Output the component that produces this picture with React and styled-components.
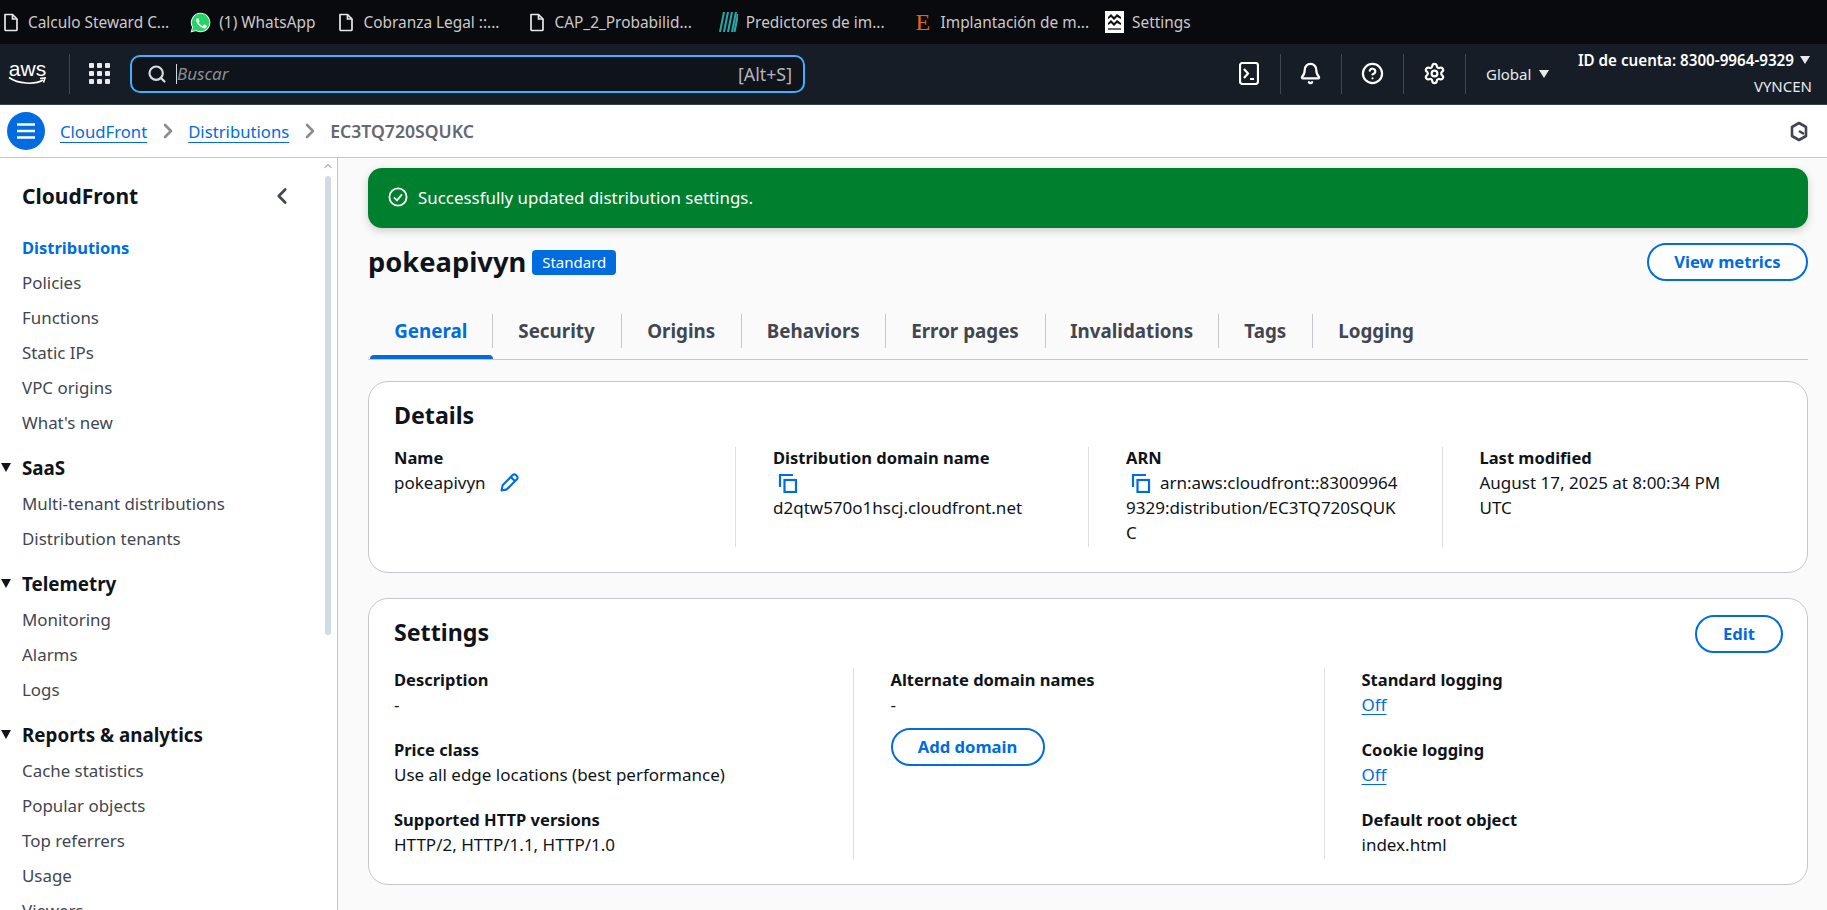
import styled, { createGlobalStyle } from "styled-components";
import { Bell, CircleHelp, Settings as Gear, ChevronRight, ChevronLeft, ChevronUp, Search } from "lucide-react";

const FONT = `"Noto Sans", "Open Sans", sans-serif`;

const bookmarks = [
  { icon: "doc", label: "Calculo Steward C...", gap: 9, left: 3 },
  { icon: "wa", label: "(1) WhatsApp", gap: 8, left: 21 },
  { icon: "doc", label: "Cobranza Legal ::...", gap: 9, left: 23 },
  { icon: "doc", label: "CAP_2_Probabilid...", gap: 9, left: 30 },
  { icon: "stripes", label: "Predictores de im...", gap: 8, left: 27 },
  { icon: "e", label: "Implantación de m...", gap: 9, left: 31 },
  { icon: "mpe", label: "Settings", gap: 8, left: 16 },
];

const tabs = [
  { label: "General", w: 122.5, active: true },
  { label: "Security", w: 129 },
  { label: "Origins", w: 120.5 },
  { label: "Behaviors", w: 143.5 },
  { label: "Error pages", w: 160 },
  { label: "Invalidations", w: 173.5 },
  { label: "Tags", w: 93.5 },
  { label: "Logging", w: 127, last: true },
];

const navGroups = [
  { items: ["Distributions", "Policies", "Functions", "Static IPs", "VPC origins", "What's new"] },
  { title: "SaaS", items: ["Multi-tenant distributions", "Distribution tenants"] },
  { title: "Telemetry", items: ["Monitoring", "Alarms", "Logs"] },
  { title: "Reports & analytics", items: ["Cache statistics", "Popular objects", "Top referrers", "Usage", "Viewers"] },
];

const DocIcon = () => (
  <svg width="16" height="19" viewBox="0 0 16 19" fill="none" stroke="#e8e8e8" strokeWidth="1.7">
    <path d="M2 1.5h7.5L14 6v10.5a1 1 0 0 1-1 1H3a1 1 0 0 1-1-1z" strokeLinejoin="round" />
    <path d="M9.5 1.5V6H14" />
  </svg>
);

const WhatsAppIcon = () => (
  <svg width="21" height="21" viewBox="0 0 24 24">
    <path d="M12 1.500a10.500 10.500 0 0 0-9 15.800L1.500 22.500l5.400-1.400A10.500 10.500 0 1 0 12 1.500z" fill="#25d366" stroke="#e8f5ec" strokeWidth="1.2" />
    <path d="M8.800 6.800c-.4 0-1.700.8-1.700 2.600 0 1.700 1.200 3.300 1.400 3.600.2.200 2.400 3.700 5.800 5 2.800 1.100 3.400.9 4-.1.500-.6 1-1.600.9-2.200-.1-.3-2.100-1.300-2.600-1.400-.4-.1-.7 0-.9.300-.3.400-.8 1.100-1 1.200-.2.200-.4.200-.7.100-1-.4-2.800-1.400-4-3.500-.2-.3 0-.5.100-.6l.7-.9c.2-.2.200-.4.100-.7l-1-2.500c-.2-.6-.6-.9-1.100-.9z" fill="#fff" />
  </svg>
);

const StripesIcon = () => (
  <svg width="19" height="20" viewBox="0 0 19 20" stroke="#2aa5a5" strokeWidth="2.1">
    <path d="M1 20 5 0M5 20 9 0M9 20 13 0M13 20 17 0M15.5 20 19 2" />
  </svg>
);

const MpeIcon = () => (
  <svg width="19" height="22" viewBox="0 0 19 22">
    <rect width="19" height="22" fill="#fff" />
    <path d="M3 6l3-3 3 3 3-3 4 3v2l-4-2-3 3-3-3-3 2zM3 12l3-3 3 3 3-3 4 3v2l-4-2-3 3-3-3-3 2z" fill="#111" />
    <path d="M3 17h13v2H3z" fill="#666" />
  </svg>
);

const ConsoleIcon = () => (
  <svg width="20" height="23" viewBox="0 0 20 23" fill="none" stroke="#fff" strokeWidth="2.2">
    <rect x="1" y="1" width="18" height="21" rx="2.5" />
    <path d="M5 7l4 4.500-4 4.500M11 17h4" />
  </svg>
);

const HamburgerIcon = () => (
  <svg width="20" height="18" viewBox="0 0 20 18" stroke="#fff" strokeWidth="2.6">
    <path d="M1 2.5h18M1 9h18M1 15.5h18" />
  </svg>
);

const QIcon = () => (
  <svg width="18" height="21" viewBox="0 0 18 21" fill="none" stroke="#424650" strokeWidth="2.6">
    <path d="M9 2l7 4v9l-7 4-7-4V6z" strokeLinejoin="round" />
    <path d="M9 10l5 3" />
  </svg>
);

const SuccessIcon = () => (
  <svg width="20" height="20" viewBox="0 0 20 20" fill="none" stroke="#fff" strokeWidth="1.8">
    <circle cx="10" cy="10" r="8.6" />
    <path d="M6 10.3l3 3 5-6" />
  </svg>
);

const CopyIcon = () => (
  <svg width="20" height="20" viewBox="0 0 20 20" fill="none" stroke="#006ce0" strokeWidth="2.2">
    <path d="M2 14V2h13" />
    <rect x="6.5" y="7" width="11.5" height="12" />
  </svg>
);

const PencilIcon = () => (
  <svg width="19" height="19" viewBox="0 0 18 18" fill="none" stroke="#006ce0" strokeWidth="2">
    <path d="M1.5 16.5l1-5L12 2a2 2 0 0 1 3 0l1 1a2 2 0 0 1 0 3l-9.500 9.500z" strokeLinejoin="round" />
    <path d="M10.500 4l3.500 3.500" />
  </svg>
);

const Bookmark = ({ item }) => (
  <BookmarkItem $gap={item.gap} $left={item.left}>
    {item.icon === "doc" && <DocIcon />}
    {item.icon === "wa" && <WhatsAppIcon />}
    {item.icon === "stripes" && <StripesIcon />}
    {item.icon === "e" && <FaviconE>E</FaviconE>}
    {item.icon === "mpe" && <MpeIcon />}
    <span>{item.label}</span>
  </BookmarkItem>
);

const Field = ({ label, snug, children }) => (
  <FieldBlock>
    <FieldLabel $snug={snug}>{label}</FieldLabel>
    <FieldValue>{children}</FieldValue>
  </FieldBlock>
);

const App = () => {
  return (
    <Page>
      <GlobalStyle />
      <BookmarkBar>
        {bookmarks.map((b) => (
          <Bookmark key={b.label} item={b} />
        ))}
      </BookmarkBar>

      <TopNav>
        <AwsLogo>
          <AwsText>aws</AwsText>
          <svg width="39" height="10" viewBox="0 0 39 10" fill="none" stroke="#fff" strokeWidth="1.6">
            <path d="M1 1.500C10 8 27 9 35 4" />
            <path d="M32 2.500l5-.5-1.500 4.500" />
          </svg>
        </AwsLogo>
        <NavDivider />
        <AppsGrid>
          {Array.from({ length: 9 }).map((_, i) => (
            <AppsDot key={i} />
          ))}
        </AppsGrid>
        <SearchBox>
          <Search size={20} color="#d5dbdb" strokeWidth={2.6} />
          <SearchCaret />
          <SearchText>Buscar</SearchText>
          <SearchHint>[Alt+S]</SearchHint>
        </SearchBox>
        <NavRight>
          <NavIconCell><ConsoleIcon /></NavIconCell>
          <NavIconCell $w={61.500}><Bell size={23} color="#fff" strokeWidth={2.3} /></NavIconCell>
          <NavIconCell $w={61.500}><CircleHelp size={23} color="#fff" strokeWidth={2.3} /></NavIconCell>
          <NavIconCell $w={62.500}><Gear size={23} color="#fff" strokeWidth={2.3} /></NavIconCell>
          <RegionMenu>
            Global <Caret />
          </RegionMenu>
          <AccountMenu>
            <AccountId>
              ID de cuenta: 8300-9964-9329 <Caret />
            </AccountId>
            <AccountName>VYNCEN</AccountName>
          </AccountMenu>
        </NavRight>
      </TopNav>

      <BreadcrumbBar>
        <MenuButton><HamburgerIcon /></MenuButton>
        <CrumbLink>CloudFront</CrumbLink>
        <ChevronRight size={24} color="#8c8c94" strokeWidth={2.6} />
        <CrumbLink>Distributions</CrumbLink>
        <ChevronRight size={24} color="#8c8c94" strokeWidth={2.6} />
        <CrumbCurrent>EC3TQ720SQUKC</CrumbCurrent>
        <CrumbEnd><QIcon /></CrumbEnd>
      </BreadcrumbBar>

      <Body>
        <Sidebar>
          <ScrollUp><ChevronUp size={12} color="#b8bcc2" strokeWidth={3} /></ScrollUp>
          <ScrollThumb />
          <SidebarHead>
            <SidebarTitle>CloudFront</SidebarTitle>
            <ChevronLeft size={26} color="#424650" strokeWidth={2.5} />
          </SidebarHead>
          {navGroups.map((g) => (
            <NavGroup key={g.items[0]} $spaced={!!g.title}>
              {g.title && (
                <NavGroupTitle>
                  <GroupCaret />
                  {g.title}
                </NavGroupTitle>
              )}
              {g.items.map((it) => (
                <NavItem key={it} $active={it === "Distributions"}>
                  {it}
                </NavItem>
              ))}
            </NavGroup>
          ))}
        </Sidebar>

        <Main>
          <Banner>
            <SuccessIcon />
            Successfully updated distribution settings.
          </Banner>

          <TitleRow>
            <PageTitle>pokeapivyn</PageTitle>
            <Badge>Standard</Badge>
            <OutlineButton $push $w={161}>View metrics</OutlineButton>
          </TitleRow>

          <TabList>
            {tabs.map((t) => (
              <Tab key={t.label} $active={t.active} $last={t.last} style={{ width: t.w }}>
                {t.label}
              </Tab>
            ))}
          </TabList>

          <Card>
            <CardHead>
              <CardTitle>Details</CardTitle>
            </CardHead>
            <Columns $cols="341px 353px 353.500px 1fr" $top={11} $h={100}>
              <Column>
                <Field snug label="Name">
                  <InlineRow>
                    pokeapivyn <PencilIcon />
                  </InlineRow>
                </Field>
              </Column>
              <Column $line>
                <Field snug label="Distribution domain name">
                  <IconLine><CopyIcon /></IconLine>
                  d2qtw570o1hscj.cloudfront.net
                </Field>
              </Column>
              <Column $line>
                <Field snug label="ARN">
                  <CopyInline><CopyIcon /></CopyInline>
                  arn:aws:cloudfront::83009964
                  <br />
                  9329:distribution/EC3TQ720SQUK
                  <br />C
                </Field>
              </Column>
              <Column $line>
                <Field snug label="Last modified">
                  August 17, 2025 at 8:00:34 PM
                  <br />
                  UTC
                </Field>
              </Column>
            </Columns>
          </Card>

          <Card $top={25}>
            <CardHead>
              <CardTitle>Settings</CardTitle>
              <OutlineButton $push $w={88}>Edit</OutlineButton>
            </CardHead>
            <Columns $cols="458.500px 471px 1fr" $top={15} $h={191}>
              <Column>
                <FieldStack>
                  <Field label="Description">-</Field>
                  <Field label="Price class">Use all edge locations (best performance)</Field>
                  <Field label="Supported HTTP versions">HTTP/2, HTTP/1.1, HTTP/1.0</Field>
                </FieldStack>
              </Column>
              <Column $line>
                <Field label="Alternate domain names">-</Field>
                <OutlineButton $w={154} $mt={11}>Add domain</OutlineButton>
              </Column>
              <Column $line>
                <FieldStack>
                  <Field label="Standard logging"><PlainLink>Off</PlainLink></Field>
                  <Field label="Cookie logging"><PlainLink>Off</PlainLink></Field>
                  <Field label="Default root object">index.html</Field>
                </FieldStack>
              </Column>
            </Columns>
          </Card>

          <Card $top={26} />
        </Main>
      </Body>
    </Page>
  );
};

//Styled Components
const GlobalStyle = createGlobalStyle`
  html, body {
    margin: 0;
    padding: 0;
    overflow: hidden;
    background: #fafafa;
  }
  * {
    box-sizing: border-box;
  }
`;

const Page = styled.div`
  width: 1827px;
  height: 910px;
  overflow: hidden;
  display: flex;
  flex-direction: column;
  font-family: ${FONT};
  font-size: 17px;
  color: #0f141a;
`;

const BookmarkBar = styled.div`
  height: 44px;
  flex: none;
  display: flex;
  align-items: center;
  background: #090a0d;
`;

const BookmarkItem = styled.div`
  display: flex;
  align-items: center;
  gap: ${(p) => p.$gap}px;
  margin-left: ${(p) => p.$left}px;
  color: #c9c9c9;
  font-size: 15.400px;
  white-space: nowrap;
`;

const FaviconE = styled.span`
  font-family: "Liberation Serif", serif;
  font-size: 24px;
  line-height: 20px;
  color: #e8650a;
  width: 16px;
`;

const TopNav = styled.div`
  height: 61px;
  flex: none;
  display: flex;
  align-items: center;
  padding-bottom: 1px;
  background: #161d26;
  border-bottom: 1px solid #3b4250;
`;

const AwsLogo = styled.div`
  width: 39px;
  margin-left: 8px;
  display: flex;
  flex-direction: column;
  align-items: center;
  line-height: 1;
`;

const AwsText = styled.span`
  font-family: "Liberation Sans", sans-serif;
  font-size: 21px;
  line-height: 15px;
  color: #fff;
`;

const NavDivider = styled.div`
  width: 1px;
  height: 40px;
  margin: 0 19px 0 22px;
  background: #424650;
`;

const AppsGrid = styled.div`
  width: 21px;
  display: grid;
  grid-template-columns: repeat(3, 5px);
  gap: 3px;
`;

const AppsDot = styled.span`
  width: 5px;
  height: 5px;
  border-radius: 1px;
  background: #e8eaed;
`;

const SearchBox = styled.div`
  width: 675px;
  height: 38px;
  margin-left: 20px;
  padding: 0 11px 0 15px;
  display: flex;
  align-items: center;
  background: #0f141a;
  border: 2px solid #42aeff;
  border-radius: 10px;
`;

const SearchCaret = styled.span`
  width: 1px;
  height: 20px;
  margin-left: 9px;
  background: #d5dbdb;
`;

const SearchText = styled.span`
  font-style: italic;
  font-size: 17px;
  color: #8c8c94;
`;

const SearchHint = styled.span`
  margin-left: auto;
  font-size: 17.800px;
  color: #b4b4bb;
`;

const NavRight = styled.div`
  margin-left: auto;
  display: flex;
  align-items: center;
  height: 100%;
`;

const NavIconCell = styled.div`
  width: ${(p) => p.$w || 62.500}px;
  height: 40px;
  display: flex;
  align-items: center;
  justify-content: center;
  border-right: 1px solid #424650;
`;

const RegionMenu = styled.div`
  width: 113px;
  padding-left: 20px;
  display: flex;
  align-items: center;
  gap: 8px;
  font-size: 15px;
  color: #e8eaed;
`;

const Caret = styled.span`
  display: inline-block;
  width: 0;
  height: 0;
  border-left: 5.500px solid transparent;
  border-right: 5.500px solid transparent;
  border-top: 8px solid #e8eaed;
`;

const AccountMenu = styled.div`
  width: 248px;
  padding-right: 15px;
  display: flex;
  flex-direction: column;
  align-items: flex-end;
  color: #fff;
`;

const AccountId = styled.div`
  display: flex;
  align-items: center;
  gap: 6px;
  margin-right: 2px;
  margin-top: -2px;
  font-size: 15.200px;
  font-weight: 600;
  line-height: 27px;
  white-space: nowrap;
`;

const AccountName = styled.div`
  font-size: 15px;
  line-height: 25px;
  color: #e8eaed;
`;

const BreadcrumbBar = styled.div`
  height: 53px;
  flex: none;
  display: flex;
  align-items: center;
  gap: 8.500px;
  padding: 0 19px 0 7px;
  background: #fff;
  border-bottom: 1px solid #c6c6cd;
`;

const MenuButton = styled.div`
  width: 38px;
  height: 38px;
  margin-right: 6.500px;
  display: flex;
  align-items: center;
  justify-content: center;
  border-radius: 50%;
  background: #006ce0;
`;

const CrumbLink = styled.a`
  font-size: 16.700px;
  color: #006ce0;
  text-decoration: underline;
  text-underline-offset: 4px;
`;

const CrumbCurrent = styled.span`
  font-size: 17.600px;
  font-weight: 600;
  color: #656871;
`;

const CrumbEnd = styled.div`
  margin-left: auto;
  display: flex;
`;

const Body = styled.div`
  flex: 1;
  display: flex;
  min-height: 0;
`;

const Sidebar = styled.nav`
  position: relative;
  width: 338px;
  flex: none;
  background: #fff;
  border-right: 1px solid #c6c6cd;
  overflow: hidden;
`;

const ScrollUp = styled.div`
  position: absolute;
  top: 2px;
  left: 322px;
  display: flex;
`;

const ScrollThumb = styled.div`
  position: absolute;
  top: 18px;
  left: 325px;
  width: 6px;
  height: 459px;
  border-radius: 3px;
  background: #d1dbe5;
`;

const SidebarHead = styled.div`
  height: 72px;
  padding: 4px 42px 0 22px;
  display: flex;
  align-items: center;
  justify-content: space-between;
`;

const SidebarTitle = styled.h2`
  margin: 0;
  font-size: 21px;
  font-weight: 700;
  color: #0f141a;
`;

const NavGroup = styled.div`
  margin-top: ${(p) => (p.$spaced ? 11 : 0)}px;
`;

const NavGroupTitle = styled.div`
  height: 35px;
  padding-bottom: 2px;
  display: flex;
  align-items: center;
  gap: 11px;
  font-size: 18.800px;
  font-weight: 700;
  color: #0f141a;
`;

const GroupCaret = styled.span`
  width: 0;
  height: 0;
  margin-left: 1px;
  border-left: 5.500px solid transparent;
  border-right: 5.500px solid transparent;
  border-top: 9px solid #0f141a;
`;

const NavItem = styled.div`
  height: 35px;
  padding-left: 22px;
  display: flex;
  align-items: center;
  font-size: ${(p) => (p.$active ? 16.500 : 16.900)}px;
  font-weight: ${(p) => (p.$active ? 700 : 400)};
  color: ${(p) => (p.$active ? "#006ce0" : "#424650")};
`;

const Main = styled.main`
  flex: 1;
  min-width: 0;
  padding: 10px 19px 0 30px;
  background: #fafafa;
`;

const Banner = styled.div`
  height: 60px;
  padding: 0 20px 2px;
  display: flex;
  align-items: center;
  gap: 10px;
  font-size: 16.900px;
  color: #fff;
  background: #00802f;
  border-radius: 14px;
  box-shadow: 0 3px 8px rgba(0, 0, 0, 0.18);
`;

const TitleRow = styled.div`
  margin-top: 15px;
  height: 38px;
  display: flex;
  align-items: center;
`;

const PageTitle = styled.h1`
  margin: 0 0 2px;
  font-size: 27.300px;
  font-weight: 700;
  color: #0f141a;
`;

const Badge = styled.span`
  margin-left: 6px;
  padding: 0 10px;
  height: 25px;
  display: flex;
  align-items: center;
  font-size: 15px;
  color: #fff;
  background: #006ce0;
  border-radius: 4px;
`;

const OutlineButton = styled.button`
  width: ${(p) => p.$w}px;
  height: 38px;
  margin-left: ${(p) => (p.$push ? "auto" : 0)};
  margin-top: ${(p) => p.$mt || 0}px;
  padding: 0 0 2px;
  font-family: ${FONT};
  font-size: 16.600px;
  font-weight: 700;
  color: #006ce0;
  background: #fff;
  border: 2px solid #006ce0;
  border-radius: 20px;
`;

const TabList = styled.div`
  position: relative;
  margin-top: 33px;
  height: 46px;
  padding-left: 2px;
  display: flex;
  border-bottom: 1px solid #c6c6cd;
`;

const Tab = styled.div`
  position: relative;
  height: 34px;
  flex: none;
  display: flex;
  align-items: center;
  justify-content: center;
  font-size: 18.800px;
  font-weight: 700;
  color: ${(p) => (p.$active ? "#006ce0" : "#424650")};
  border-right: ${(p) => (p.$last ? "none" : "1px solid #c6c6cd")};

  &::after {
    content: "";
    display: ${(p) => (p.$active ? "block" : "none")};
    position: absolute;
    left: 0;
    right: -1px;
    top: 41px;
    height: 4px;
    border-radius: 4px 4px 0 0;
    background: #006ce0;
  }
`;

const Card = styled.section`
  margin-top: ${(p) => p.$top || 21}px;
  padding: 16px 24px 25px 25px;
  min-height: 100px;
  background: #fff;
  border: 1px solid #c6c6cd;
  border-radius: 20px;
`;

const CardHead = styled.div`
  height: 38px;
  display: flex;
  align-items: center;
`;

const CardTitle = styled.h2`
  margin: 0 0 4px;
  font-size: 23.200px;
  font-weight: 700;
  color: #0f141a;
`;

const Columns = styled.div`
  margin-top: ${(p) => p.$top}px;
  height: ${(p) => p.$h}px;
  display: grid;
  grid-template-columns: ${(p) => p.$cols};
`;

const Column = styled.div`
  padding-left: ${(p) => (p.$line ? 37 : 0)}px;
  border-left: ${(p) => (p.$line ? "1px solid #dedee3" : "none")};

  & > :first-child {
    margin-top: -1px;
  }
`;

const FieldStack = styled.div`
  display: flex;
  flex-direction: column;
  gap: 20px;
`;

const FieldBlock = styled.div`
  line-height: 25px;
`;

const FieldLabel = styled.div`
  line-height: ${(p) => (p.$snug ? 23 : 25)}px;
  margin-bottom: ${(p) => (p.$snug ? 1 : 0)}px;
  font-size: 16.500px;
  font-weight: 700;
  color: #0f141a;
`;

const FieldValue = styled.div`
  font-size: 17px;
  color: #0f141a;
`;

const InlineRow = styled.div`
  display: flex;
  align-items: center;
  gap: 14px;
`;

const IconLine = styled.div`
  height: 25px;
  padding-left: 5px;
  display: flex;
  align-items: center;
`;

const CopyInline = styled.span`
  display: inline-flex;
  vertical-align: -4px;
  margin: 0 9px 0 5px;
`;

const PlainLink = styled.a`
  color: #006ce0;
  text-decoration: underline;
  text-underline-offset: 3px;
`;

export default App;
